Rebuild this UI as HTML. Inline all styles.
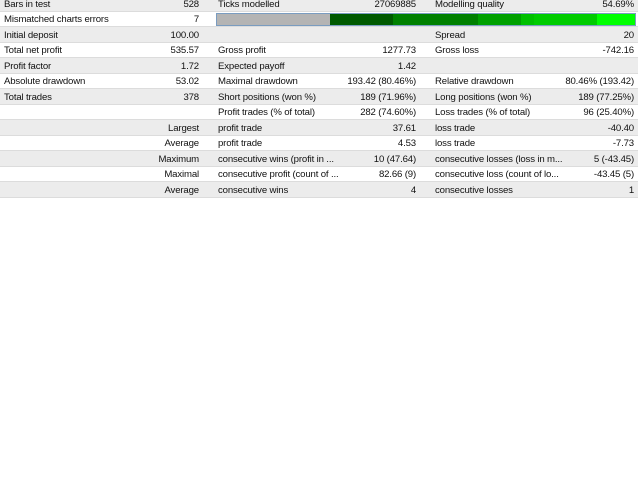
<!DOCTYPE html>
<html><head><style>
body{margin:0;width:640px;height:480px;background:#fff;overflow:hidden;font-family:"Liberation Sans",sans-serif;font-size:9.6px;letter-spacing:-0.15px;color:#111;position:relative}
.r{position:absolute;left:0;width:638px;height:15.5px;box-sizing:border-box;border-bottom:1px solid #dcdcdc}
.g{background:#ececec}
.w{background:#fff}
.r span{position:absolute;top:2.5px;line-height:12px;white-space:nowrap}
.l1{left:4px}.v1{right:439px}.l2{left:218px}.v2{right:222px}.l3{left:435px}.v3{right:4px}
.bar{position:absolute;left:216px;top:13px;width:420px;height:13px;border:1px solid #7a9cc0;box-sizing:border-box;display:flex}
.bar div{height:100%}
</style></head><body>
<div class="r g" style="top:-4px"><span class="l1">Bars in test</span><span class="v1">528</span><span class="l2">Ticks modelled</span><span class="v2">27069885</span><span class="l3">Modelling quality</span><span class="v3">54.69%</span></div>
<div class="r w" style="top:11.5px"><span class="l1">Mismatched charts errors</span><span class="v1">7</span></div>
<div class="bar"><div style="width:113px;background:#b4b4b4"></div><div style="width:63px;background:#005a00"></div><div style="width:85px;background:#008000"></div><div style="width:43px;background:#00a000"></div><div style="width:13px;background:#00c000"></div><div style="width:63px;background:#00cc00"></div><div style="flex:1;background:#00ff00"></div></div>
<div class="r g" style="top:27px"><span class="l1">Initial deposit</span><span class="v1">100.00</span><span class="l3">Spread</span><span class="v3">20</span></div>
<div class="r w" style="top:42.5px"><span class="l1">Total net profit</span><span class="v1">535.57</span><span class="l2">Gross profit</span><span class="v2">1277.73</span><span class="l3">Gross loss</span><span class="v3">-742.16</span></div>
<div class="r g" style="top:58px"><span class="l1">Profit factor</span><span class="v1">1.72</span><span class="l2">Expected payoff</span><span class="v2">1.42</span></div>
<div class="r w" style="top:73.5px"><span class="l1">Absolute drawdown</span><span class="v1">53.02</span><span class="l2">Maximal drawdown</span><span class="v2">193.42 (80.46%)</span><span class="l3">Relative drawdown</span><span class="v3">80.46% (193.42)</span></div>
<div class="r g" style="top:89px"><span class="l1">Total trades</span><span class="v1">378</span><span class="l2">Short positions (won %)</span><span class="v2">189 (71.96%)</span><span class="l3">Long positions (won %)</span><span class="v3">189 (77.25%)</span></div>
<div class="r w" style="top:104.5px"><span class="l2">Profit trades (% of total)</span><span class="v2">282 (74.60%)</span><span class="l3">Loss trades (% of total)</span><span class="v3">96 (25.40%)</span></div>
<div class="r g" style="top:120px"><span class="v1">Largest</span><span class="l2">profit trade</span><span class="v2">37.61</span><span class="l3">loss trade</span><span class="v3">-40.40</span></div>
<div class="r w" style="top:135.5px"><span class="v1">Average</span><span class="l2">profit trade</span><span class="v2">4.53</span><span class="l3">loss trade</span><span class="v3">-7.73</span></div>
<div class="r g" style="top:151px"><span class="v1">Maximum</span><span class="l2">consecutive wins (profit in ...</span><span class="v2">10 (47.64)</span><span class="l3">consecutive losses (loss in m...</span><span class="v3">5 (-43.45)</span></div>
<div class="r w" style="top:166.5px"><span class="v1">Maximal</span><span class="l2">consecutive profit (count of ...</span><span class="v2">82.66 (9)</span><span class="l3">consecutive loss (count of lo...</span><span class="v3">-43.45 (5)</span></div>
<div class="r g" style="top:182px"><span class="v1">Average</span><span class="l2">consecutive wins</span><span class="v2">4</span><span class="l3">consecutive losses</span><span class="v3">1</span></div>
</body></html>
